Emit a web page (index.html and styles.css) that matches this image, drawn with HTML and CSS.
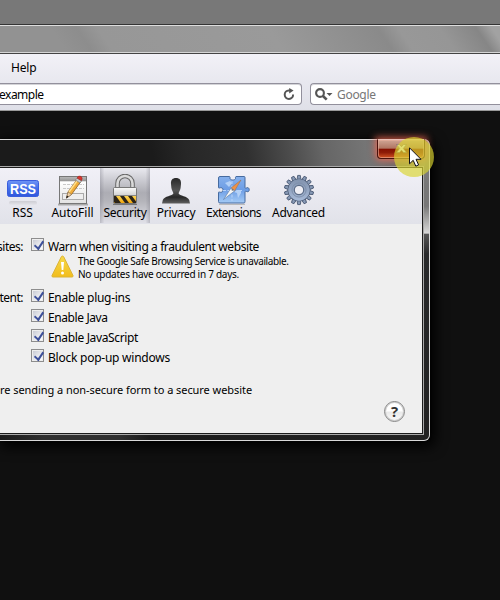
FILE: index.html
```
<!DOCTYPE html>
<html lang="en">
<head>
<meta charset="utf-8">
<title>Security</title>
<link rel="stylesheet" href="styles.css">
</head>
<body>
<div class="browser">
  <div class="desk"></div>
  <div class="titlebar"></div>
  <div class="chrome">
    <nav class="menu"><span class="t-help">Help</span></nav>
    <div class="fields">
      <div class="field address"><span class="t-example">example</span>
        <svg width="12" height="13" viewBox="0 0 12 13"><path d="M10.1 6.600a4.200 4.200 0 1 1-4.300-4.100H7" fill="none" stroke="#555" stroke-width="2"/><path d="M6.200 0v5.600L10.600 2.500z" fill="#555"/></svg>
      </div>
      <div class="field search">
        <svg width="18" height="13" viewBox="0 0 18 13"><circle cx="5" cy="5" r="3.900" fill="none" stroke="#555" stroke-width="2.100"/><path d="M8 8l3.700 3.700" stroke="#555" stroke-width="2.600"/><path d="M11.500 5h6l-3 3z" fill="#555"/></svg>
        <span class="t-google">Google</span>
      </div>
    </div>
  </div>
</div>

<div class="dialog">
  <div class="caption"></div>
  <div class="close"><svg width="11" height="9" viewBox="0 0 11 9"><path d="M.5.500h3l2 2.200 2-2.200h3L7.300 4.400l3.200 4.100h-3L5.500 6.200 3.500 8.500h-3l3.200-4.100z" fill="#f4f0ec" stroke="#71615d" stroke-width=".6"/></svg></div>
  <div class="content">
    <div class="tabs">
      <div class="tab rss">
        <svg width="34" height="32" viewBox="0 0 34 32">
          <defs><linearGradient id="rb" x2="0" y2="1"><stop stop-color="#6f95f5"/><stop offset=".5" stop-color="#4470ea"/><stop offset="1" stop-color="#3157dc"/></linearGradient><linearGradient id="rr" x2="0" y2="1"><stop stop-color="#cdcdd3"/><stop offset="1" stop-color="#e4e4ea"/></linearGradient></defs>
          <rect x="3" y="27" width="28" height="4" rx="2" fill="url(#rr)"/>
          <rect x="1.500" y="6.500" width="31" height="16" rx="2" fill="url(#rb)" stroke="#3a5ddd"/>
          <text x="17" y="19.500" text-anchor="middle" class="rss-text" textLength="26" lengthAdjust="spacingAndGlyphs">RSS</text>
        </svg><span class="t-rss">RSS</span></div>
      <div class="tab autofill">
        <svg width="32" height="32" viewBox="0 0 32 32">
          <defs><linearGradient id="ab" x2="0" y2="1"><stop stop-color="#bbb"/><stop offset=".15" stop-color="#999"/><stop offset=".2" stop-color="#fff"/><stop offset="1" stop-color="#e2e2e2"/></linearGradient></defs>
          <path d="M1 30.500h30" stroke="#aaa" stroke-width="2"/>
          <rect x="2.500" y="2.500" width="27" height="27" fill="url(#ab)" stroke="#777"/>
          <path d="M6 10.500h21M6 14.500h21" stroke="#c9c9c9" stroke-dasharray="3 1"/>
          <rect x="5.500" y="19.500" width="21" height="6" fill="#eee" stroke="#aaa"/>
          <path d="M9.500 24l1.500-6 9-12.500 3.500 2.500-9 12.500z" fill="#f0ad3a" stroke="#8a5a20" stroke-width=".8"/>
          <path d="M12 18L21 5.500" stroke="#ffe08a" stroke-width="1.500"/>
          <path d="M9.500 24l1.500-6 3.500 2.500z" fill="#efd2a8" stroke="#765" stroke-width=".5"/><path d="M9 24.500l1-3 1.700 1.200z" fill="#222"/>
          <path d="M18.500 6l1.500-2 4.500 3-1.500 2z" fill="#ccc" stroke="#777" stroke-width=".6"/><path d="M20 4q1.500-3 4-1.600 2 1.200.5 4.200z" fill="#d8352e" stroke="#a3231d" stroke-width=".6"/>
        </svg><span class="t-autofill">AutoFill</span></div>
      <div class="tab security">
        <svg width="32" height="32" viewBox="0 0 32 32">
          <defs><linearGradient id="lk" x2="0" y2="1"><stop stop-color="#fafafa"/><stop offset="1" stop-color="#aaa"/></linearGradient><linearGradient id="ly" x2="0" y2="1"><stop stop-color="#ffd653"/><stop offset="1" stop-color="#f0a60d"/></linearGradient><clipPath id="lc"><path d="M5 22h22v7H5z"/></clipPath></defs>
          <path d="M8.500 14V9.500a7.500 7.500 0 0 1 15 0V14" fill="none" stroke="#666" stroke-width="4.500"/>
          <path d="M8.500 14V9.500a7.500 7.500 0 0 1 15 0V14" fill="none" stroke="#d9d9d9" stroke-width="2.600"/>
          <rect x="4.500" y="13.500" width="23" height="16" rx="1" fill="url(#lk)" stroke="#777"/>
          <g clip-path="url(#lc)"><path d="M5 22h22v7H5z" fill="url(#ly)"/><path d="M5 22h2l5 7H6l-1-1zM11 22h4l5 7h-4zM19 22h4l4 5.500v1.500h-3z" fill="#2c2418"/></g>
          <path d="M5 21.500h22" stroke="#888"/><path d="M4 30.500h24" stroke="#777"/>
        </svg><span class="t-security">Security</span></div>
      <div class="tab privacy">
        <svg width="32" height="32" viewBox="0 0 32 32"><defs><linearGradient id="pv" x2="0" y2="1"><stop stop-color="#292929"/><stop offset=".5" stop-color="#555"/><stop offset=".75" stop-color="#282828"/><stop offset="1" stop-color="#616161"/></linearGradient></defs><path d="M16 4c-3.500 0-5.300 2-5 6l.4 4c.4 2.700 2 4 2 5.500-.8 2.500-9.200 2.500-10.600 6.500L2 29.500h28L29.200 26c-1.400-4-9.800-4-10.600-6.500 0-1.500 1.600-2.800 2-5.500l.4-4c.3-4-1.500-6-5-6z" fill="url(#pv)"/></svg><span class="t-privacy">Privacy</span></div>
      <div class="tab extensions">
        <svg width="34" height="32" viewBox="0 0 34 32"><defs><linearGradient id="ex" x2="0" y2="1"><stop stop-color="#86b0ec"/><stop offset=".5" stop-color="#6d9de5"/><stop offset="1" stop-color="#a4cbf6"/></linearGradient></defs>
          <path d="M3 2.500h9.500c1 .5.300 1.500.5 2 .5 2 5 2 5.500 0 .2-.5-.5-1.500.5-2H27q1 0 1 1V13.500c0 1 1 .8 2 .2 3-.7 3 4.700 0 4-1-.5-2-.8-2 .2V27.500q0 1.500-1 1.500H3q-1.500 0-1.500-1.500V18.500c0-1 1-.3 2-.2 3.500.4 3.500-5 0-4.600-1 .2-2 .8-2-.2V4q0-1.500 1.500-1.500z" fill="url(#ex)" stroke="#466b9f"/>
          <path d="M2 30.500h26" stroke="#bbb"/>
          <path d="M15 7v20M6 16.500h19" stroke="#b9d4f8" stroke-dasharray="3 1.500"/><path d="M8 9l5-2 2 2-3 4zM20 16l-3 2 3 1 1 5 3-5v-3z" fill="#b4d1f7"/>
          <path d="M24 6L17.500 17l-3.500-3z" fill="#ee9146" stroke="#96704f" stroke-width=".5"/><path d="M6.500 25.500l7.500-11.500 3.500 3z" fill="#f6f6f6" stroke="#5676a0" stroke-width=".6"/><circle cx="15.500" cy="15.800" r="1" fill="#777"/>
        </svg><span class="t-extensions">Extensions</span></div>
      <div class="tab advanced">
        <svg width="34" height="34" viewBox="0 0 34 34"><defs><linearGradient id="ad" x2="0" y2="1"><stop stop-color="#8293ae"/><stop offset="1" stop-color="#a6b9d7"/></linearGradient></defs>
          <g fill="#8799b5" stroke="#465570" stroke-width=".9">
            <path id="tooth" d="M15 5.500L15.600 1.500h2.800L19 5.500v23l-.6 4h-2.800L15 28.500z"/><use href="#tooth" transform="rotate(25.700 17 17)"/><use href="#tooth" transform="rotate(51.400 17 17)"/><use href="#tooth" transform="rotate(77.100 17 17)"/><use href="#tooth" transform="rotate(102.900 17 17)"/><use href="#tooth" transform="rotate(128.600 17 17)"/><use href="#tooth" transform="rotate(154.300 17 17)"/>
            <circle cx="17" cy="17" r="11.700"/></g>
          <circle cx="17" cy="17" r="11.300" fill="url(#ad)"/><circle cx="17" cy="17" r="7.500" fill="none" stroke="#7d8ea9"/>
          <circle cx="17" cy="17" r="5" fill="#eeeef4" stroke="#5d6d88" stroke-width="1.300"/>
        </svg><span class="t-advanced">Advanced</span></div>
    </div>
    <div class="settings">
      <div class="row first"><span class="label">sites:</span><i class="check"></i><span class="t-warn">Warn when visiting a fraudulent website</span></div>
      <div class="notice">
        <svg width="23" height="23" viewBox="0 0 23 23"><defs><linearGradient id="wn" x2="0" y2="1"><stop stop-color="#f5d94b"/><stop offset="1" stop-color="#f2bd1c"/></linearGradient></defs><path d="M11.500 1q.8 0 1.300 1L22 20.500q.5 1.500-1 1.500h-19q-1.500 0-1-1.500L10.200 2q.5-1 1.300-1z" fill="url(#wn)" stroke="#dcb437"/><path d="M10 7h3l-.7 8h-1.600z" fill="#fff"/><circle cx="11.500" cy="18" r="1.500" fill="#fff"/></svg>
        <p><span class="t-note1">The Google Safe Browsing Service is unavailable.</span><br><span class="t-note2">No updates have occurred in 7 days.</span></p>
      </div>
      <div class="row"><span class="label">tent:</span><i class="check"></i><span class="t-plug">Enable plug-ins</span></div>
      <div class="row"><span class="label"></span><i class="check"></i><span class="t-java">Enable Java</span></div>
      <div class="row"><span class="label"></span><i class="check"></i><span class="t-js">Enable JavaScript</span></div>
      <div class="row"><span class="label"></span><i class="check"></i><span class="t-pop">Block pop-up windows</span></div>
      <div class="form-note"><span class="t-form">re sending a non-secure form to a secure website</span></div>
      <div class="help"><span>?</span></div>
    </div>
  </div>
</div>
<div class="halo"></div>
<svg class="cursor" width="13" height="21" viewBox="0 0 13 21"><path d="M.5.800v16l3.700-3.500 2.600 5.900 2.800-1.300L7 12.300h5z" fill="#fff" stroke="#101018"/></svg>
</body>
</html>
```
FILE: styles.css
```
* { box-sizing: border-box; }
body { margin: 0; width: 500px; height: 600px; overflow: hidden; position: relative; background: #101010; font: 12px/16px "Noto Sans", sans-serif; color: #000; }
span { white-space: nowrap; }
svg { display: block; flex: none; }
.desk { height: 24px; background: #787878; }
.titlebar { height: 30px; border-top: 1px solid #343434; border-bottom: 1px solid #444; box-shadow: inset 0 1px #ddd, inset 0 -1px #d5d5d5; background: linear-gradient(56deg, #929292 0 13%, #8d8d8d 18%, #979797 22%, #9a9a9a 55%, #8a8a8a 76%, #989898 80%, #969696 88%, #868686 95%, #a2a2a2 98%); }
.chrome { height: 57px; background: linear-gradient(#f2f1f7, #e8e8ef 50%, #dfe0e8); border-bottom: 1px solid #999; }
.menu { height: 29px; padding: 6px 0 0 11px; }
.t-help { letter-spacing: -.2px; }
.fields { display: flex; gap: 8px; }
.field { height: 22px; background: #fff; border: 1px solid #92909c; box-shadow: inset 0 1px #d4d4d8; display: flex; align-items: center; }
.field span { padding-top: 2px; }
.address { width: 302px; border-left: 0; border-radius: 0 4px 4px 0; justify-content: space-between; padding-right: 6px; }
.address span { margin-left: -1px; letter-spacing: -.5px; }
.search { flex: 1; border-right: 0; border-radius: 4px 0 0 4px; gap: 4px; padding-left: 4px; color: #777; }
.t-google { letter-spacing: -.3px; }

.dialog { position: absolute; left: 0; top: 139px; width: 430px; height: 302px; border: 1px solid #d8d8d8; border-left: 0; border-radius: 0 6px 6px 0; padding-right: 5px; box-shadow: 0 0 2px #000, 3px 4px 13px 2px #000; background: linear-gradient(#888 0, #777 15%, #777 22%, #d7d7d7 31%, #555 31.500%, #292a2b 38%, #222) 100% 0 / 6px 100% no-repeat, linear-gradient(90deg, #1b1b1b, #303030 10% 28%, #1b1b1b 35%, #242424); }
.caption { height: 26px; background: linear-gradient(80deg, #1b1b1b 0 36%, #272727 44%, #303030 58%, #4c4c4c 68%, #666 76%, #757575 86%, #6a6a6a 93%, #888 100%); margin-right: -1px; }
.content { height: 269px; border: 1px solid #aaa; border-left: 0; box-shadow: inset -1px 1px #1c1c1c, inset 0 -1px #1c1c1c; background: #efefef; padding: 1px 1px 1px 0; overflow: hidden; }
.tabs { height: 56px; background: linear-gradient(#f1f0f7, #e1e2e9); display: grid; grid-template-columns: 45px 55px 50px 52px 63px 67px; }
.tab { height: 55px; padding-top: 6px; display: flex; flex-direction: column; align-items: center; }
.tab svg { height: 32px; }
.tab span { margin-top: -1px; }
.rss svg { margin-left: 1px; }
.t-security { letter-spacing: -.25px; }
.t-privacy { letter-spacing: -.2px; }
.t-extensions { letter-spacing: -.6px; }
.t-advanced { letter-spacing: -.3px; }
.security { background: linear-gradient(90deg, #73738055, transparent 9% 91%, #73738055), linear-gradient(#e9e9ef, #adadb4 45%, #b4b4ba 60%, #e0e0e7); }
.rss-text { font: bold 14px "Liberation Sans", sans-serif; fill: #fff; }
.settings { padding-top: 14px; }
.row { display: grid; grid-template-columns: 23px 25px auto; height: 20px; }
.label { text-align: right; justify-self: end; letter-spacing: -.5px; }
.check { margin-left: 8px; width: 13px; height: 13px; border: 1px solid #8d8d8d; background: linear-gradient(135deg, #c9cbd4, #fff) content-box, #eee; padding: 1px; }
.check::after { content: ""; display: block; width: 4px; height: 8px; margin: -1px 0 0 3px; border: solid #3d509a; border-width: 0 2px 2px 0; transform: rotate(34deg) skewY(8deg); }
.first { height: 17px; }
.row > span { padding-top: 1px; }
.t-warn { letter-spacing: -.4px; }
.t-plug { letter-spacing: -.3px; }
.t-java { letter-spacing: -.4px; }
.t-js { letter-spacing: -.36px; }
.t-pop { letter-spacing: -.24px; }
.t-note1 { letter-spacing: -.36px; }
.t-note2 { letter-spacing: -.27px; }
.t-form { font-size: 11px; letter-spacing: -.06px; }
.notice { display: flex; gap: 4px; height: 34px; padding-left: 51px; font-size: 10px; line-height: 13px; }
.notice p { margin: 0; }
.form-note { padding-top: 13px; height: 33px; }
.help { width: 21px; height: 21px; border: 1px solid #858585; box-shadow: inset 0 0 0 1px #ccc; border-radius: 50%; margin: -1px 0 0 384px; background: linear-gradient(#fff 48%, #e9e9e9 52%, #fafafa); display: flex; justify-content: center; align-items: center; font: bold 15px/15px "Open Sans", sans-serif; color: #333; }
.close { position: absolute; left: 377px; top: -1px; width: 48px; height: 20px; border: 1px solid #49120c; border-top-color: #eac0b8; border-radius: 0 0 4px 4px; background: linear-gradient(#d0a594, #b07562 46%, #850f00 50%, #8e1c08 70%, #d45322); box-shadow: inset 0 0 0 1px #e9ae9b99, 0 0 7px 2px #f36a55cc; display: flex; justify-content: center; padding-top: 4px; }
.halo { position: absolute; left: 394px; top: 137px; width: 40px; height: 40px; border-radius: 50%; background: #d9d530aa; }
.cursor { position: absolute; left: 409px; top: 147px; }
```
